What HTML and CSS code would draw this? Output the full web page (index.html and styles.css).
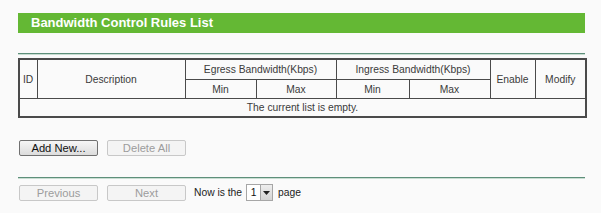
FILE: index.html
```html
<!DOCTYPE html>
<html>
<head>
<meta charset="utf-8">
<link rel="stylesheet" href="styles.css">
</head>
<body>
<div class="page">
  <div class="title">Bandwidth Control Rules List</div>
  <div class="rule rule-top"></div>
  <table class="rules">
    <colgroup>
      <col class="c-id"><col class="c-desc"><col class="c-emin"><col class="c-emax">
      <col class="c-imin"><col class="c-imax"><col class="c-en"><col class="c-mod">
    </colgroup>
    <tr class="r1">
      <td rowspan="2" class="left">ID</td>
      <td rowspan="2">Description</td>
      <td colspan="2">Egress Bandwidth(Kbps)</td>
      <td colspan="2">Ingress Bandwidth(Kbps)</td>
      <td rowspan="2">Enable</td>
      <td rowspan="2">Modify</td>
    </tr>
    <tr class="r2">
      <td>Min</td><td>Max</td><td>Min</td><td>Max</td>
    </tr>
    <tr class="r3">
      <td colspan="8">The current list is empty.</td>
    </tr>
  </table>
  <div class="actions">
    <button class="btn">Add New...</button>
    <button class="btn" disabled>Delete All</button>
  </div>
  <div class="rule rule-bottom"></div>
  <div class="pager">
    <button class="btn" disabled>Previous</button>
    <button class="btn" disabled>Next</button>
    <span class="label">Now is the</span>
    <span class="select"><span class="val">1</span><span class="arrow"><svg width="7" height="4" viewBox="0 0 7 4"><path d="M0 0h7L3.5 4z" fill="#222"/></svg></span></span>
    <span class="label">page</span>
  </div>
</div>
</body>
</html>
```
FILE: styles.css
```css
html, body {
  margin: 0;
  background: #fafafa;
}
body {
  font-family: "Liberation Sans", Arial, sans-serif;
  font-size: 10.3px;
  color: #222;
}
.page {
  width: 567px;
  padding: 13px 0 0 18px;
}
.title {
  height: 20px;
  line-height: 20px;
  background: #64b834;
  color: #fff;
  font-weight: bold;
  font-size: 13px;
  padding-left: 13px;
}
.rule {
  height: 1px;
  background: #5e8f7a;
  border-bottom: 1px solid #c8ddd2;
}
.rule-top {
  margin-top: 20px;
}
.rules {
  margin-top: 3px;
  width: 567px;
  table-layout: fixed;
  border-collapse: collapse;
  border: 2px solid #4a4a4a;
}
.rules td {
  border: 1px solid #4a4a4a;
  text-align: center;
  padding: 0;
  color: #3a3a3a;
}
.rules .left {
  text-align: left;
  padding-left: 3px;
}
.r1 td { height: 19px; }
.r2 td { height: 18px; }
.r3 td { height: 17px; border-bottom: 0; }
.c-id { width: 18px; }
.c-desc { width: 148px; }
.c-emin { width: 71px; }
.c-emax { width: 80px; }
.c-imin { width: 73px; }
.c-imax { width: 81px; }
.c-en { width: 45px; }
.c-mod { width: 51px; }
.actions {
  display: flex;
  gap: 9px;
  margin-top: 22px;
  padding-left: 1px;
}
.btn {
  width: 79px;
  height: 16px;
  padding: 0;
  font-family: "Liberation Sans", Arial, sans-serif;
  font-size: 11.2px;
  color: #111;
  background: linear-gradient(#f6f6f6, #dcdcdc);
  border: 1px solid #707070;
  border-radius: 2px;
}
.btn:disabled {
  color: #9c9c9c;
  background: #f4f4f4;
  border-color: #c8c8c8;
}
.rule-bottom {
  margin-top: 21px;
}
.pager {
  display: flex;
  align-items: center;
  margin-top: 5px;
  padding-left: 1px;
}
.pager .btn + .btn {
  margin-left: 9px;
}
.label {
  color: #222;
}
.pager .btn + .label {
  margin-left: 8px;
}
.select {
  display: flex;
  align-items: stretch;
  width: 25px;
  height: 15px;
  margin: 0 5px 0 4px;
  border: 1px solid #a6a6a6;
  background: #fff;
}
.val {
  flex: 1;
  text-align: center;
  line-height: 15px;
  color: #111;
}
.arrow {
  width: 11px;
  display: flex;
  align-items: center;
  justify-content: center;
  background: linear-gradient(#eee, #d4d4d4);
  border-left: 1px solid #a6a6a6;
}
```
